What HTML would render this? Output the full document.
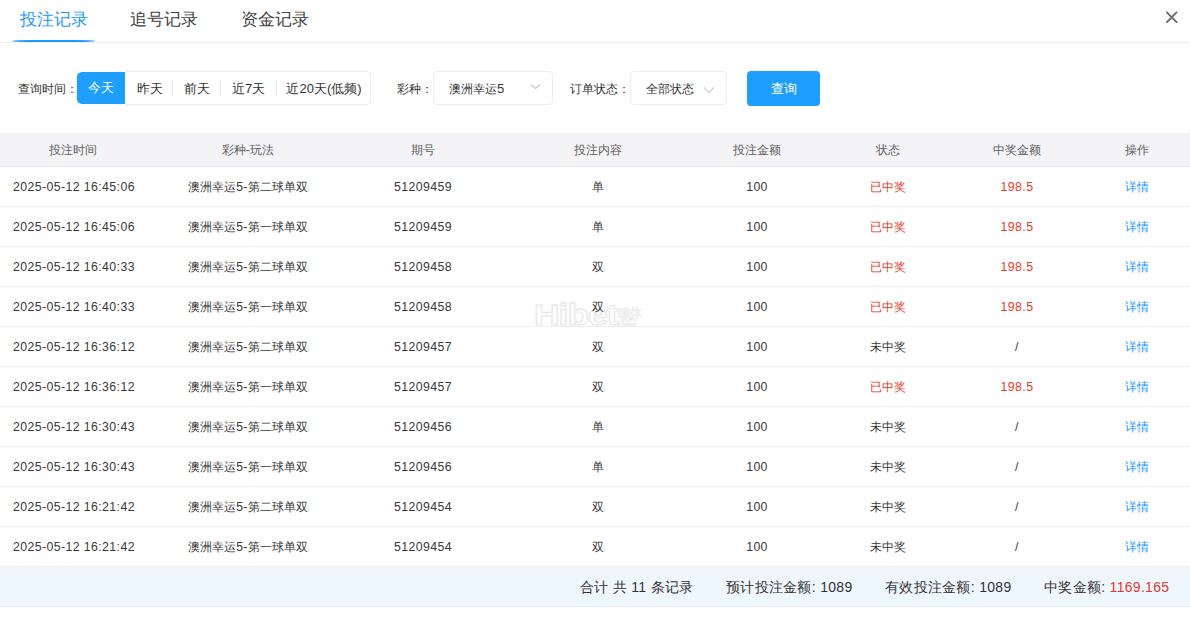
<!DOCTYPE html>
<html><head><meta charset="utf-8">
<style>
*{margin:0;padding:0;box-sizing:border-box}
html,body{width:1190px;height:630px;background:#fff;overflow:hidden;font-family:"Liberation Sans",sans-serif;color:#383838}
i{font-style:normal;font-size:12px}
.tabs{position:absolute;left:0;top:0;width:1190px;height:43px;border-bottom:1px solid #f0f0f0}
.tab{position:absolute;top:9px;font-size:17px;line-height:20px;color:#404040}
.tab i{font-size:16.5px}
.tab.active{color:#1e96fc}
.ul{position:absolute;left:12px;top:40px;width:83px;height:2px;background:#1e96fc;border-radius:50%/100%}
.close{position:absolute;left:1163px;top:9px}
.lbl{position:absolute;top:81px;font-size:13px;line-height:16px;color:#333}
.grp{position:absolute;left:77px;top:71px;width:294px;height:34px;border:1px solid #eceef2;border-radius:4px}
.gb{position:absolute;top:0;height:32px;line-height:33px;font-size:13px;text-align:center;color:#333}
.gb i{font-size:13px}
.gb.on{background:#1e9fff;color:#fff;left:-1px!important;top:-1px;height:34px;line-height:32px;width:48px!important;border-radius:5px 0 0 5px;border-top:1px solid #fff;border-bottom:1px solid #fff;background-clip:padding-box}
.sep{position:absolute;top:8px;width:1px;height:16px;background:#e6e6e6}
.sel{position:absolute;top:71px;height:34px;border:1px solid #eceef2;border-radius:4px;font-size:13px;line-height:33px;color:#333}
.chev{position:absolute}
.btn{position:absolute;left:747px;top:71px;width:73px;height:35px;background:#1e9fff;border-radius:4px;color:#fff;font-size:13px;line-height:35px;text-align:center}
.btn i{font-size:13px}
.thead{position:absolute;left:0;top:133px;width:1190px;height:34px;background:#f4f4f6;border-bottom:1px solid #e7ebf1}
.thead .c{top:9px;color:#606060}
.row{position:absolute;left:0;width:1190px;height:40px;border-bottom:1px solid #eeeeee}
.c{position:absolute;width:200px;text-align:center;font-size:12.3px;line-height:16px;top:12px;white-space:nowrap;letter-spacing:0.4px}
.c i{letter-spacing:0}
.red{color:#e5392c}
.blue{color:#1b95fd}
.foot{position:absolute;left:0;top:566px;width:1190px;height:41px;background:#eef6fe;border-bottom:1px solid #e8eef4;border-top:1px solid #eef0f2}
.ft{position:absolute;top:12px;font-size:14px;line-height:16px;color:#333;letter-spacing:0.3px}
.ft i{font-size:100%}

</style></head><body>
<div class="tabs">
  <div class="tab active" style="left:20px"><i>投注记录</i></div>
  <div class="tab" style="left:130px"><i>追号记录</i></div>
  <div class="tab" style="left:241px"><i>资金记录</i></div>
  <div class="ul"></div>
  <svg class="close" width="20" height="20" viewBox="0 0 20 20"><path d="M3.9 3.4L13.6 13.1M13.6 3.4L3.9 13.1" stroke="#6b6b6b" stroke-width="1.9" stroke-linecap="round" fill="none"/></svg>
</div>
<div class="lbl" style="left:18px"><i>查询时间：</i></div>
<div class="grp">
  <div class="gb on" style="left:0;width:48px"><i>今天</i></div>
  <div class="gb" style="left:48px;width:47px"><i>昨天</i></div>
  <div class="sep" style="left:94px"></div>
  <div class="gb" style="left:95px;width:48px"><i>前天</i></div>
  <div class="sep" style="left:142px"></div>
  <div class="gb" style="left:143px;width:55px"><i>近</i>7<i>天</i></div>
  <div class="sep" style="left:198px"></div>
  <div class="gb" style="left:199px;width:94px"><i>近</i>20<i>天</i>(<i>低频</i>)</div>
</div>
<div class="lbl" style="left:397px"><i>彩种：</i></div>
<div class="sel" style="left:433px;width:120px;padding-left:15px"><i>澳洲幸运</i>5
  <svg class="chev" style="left:95.5px;top:10.5px" width="12" height="8" viewBox="0 0 12 8"><path d="M1 1.5L5.5 5.5L10 1.5" stroke="#c9ccd4" stroke-width="1.2" fill="none"/></svg></div>
<div class="lbl" style="left:570px"><i>订单状态：</i></div>
<div class="sel" style="left:630px;width:97px;padding-left:15px"><i>全部状态</i>
  <svg class="chev" style="left:72px;top:13.5px" width="12" height="8" viewBox="0 0 12 8"><path d="M1 1.5L6 6.5L11 1.5" stroke="#c9ccd4" stroke-width="1.2" fill="none"/></svg></div>
<div class="btn"><i>查询</i></div>
<svg style="position:absolute;left:525px;top:295px" width="140" height="40" viewBox="0 0 140 40">
<g transform="translate(9,30) scale(1.22,1)"><text x="0" y="0" font-family="Liberation Sans" font-weight="bold" font-size="29" letter-spacing="-0.8" fill="#fff" stroke="#ebebeb" stroke-width="1.4">Hibet</text></g>
<text x="92" y="30.5" font-family="Liberation Sans" font-weight="bold" font-size="14" letter-spacing="-0.3" fill="#fff" stroke="#ececec" stroke-width="1.1">.cc</text>
<text x="93" y="22" font-family="Liberation Sans" font-weight="bold" font-size="12" fill="#fff" stroke="#efefef" stroke-width="0.6">综体</text>
</svg>
<div class="thead">
<div class="c" style="left:-27px"><i>投注时间</i></div>
<div class="c" style="left:148px"><i>彩种</i>-<i>玩法</i></div>
<div class="c" style="left:323px"><i>期号</i></div>
<div class="c" style="left:498px"><i>投注内容</i></div>
<div class="c" style="left:657px"><i>投注金额</i></div>
<div class="c" style="left:788px"><i>状态</i></div>
<div class="c" style="left:917px"><i>中奖金额</i></div>
<div class="c" style="left:1037px"><i>操作</i></div>
</div>
<div class="row" style="top:167px">
<div class="c" style="left:-26px">2025-05-12 16:45:06</div>
<div class="c" style="left:148px"><i>澳洲幸运</i>5-<i>第二球单双</i></div>
<div class="c" style="left:323px">51209459</div>
<div class="c" style="left:498px"><i>单</i></div>
<div class="c" style="left:657px">100</div>
<div class="c red" style="left:788px"><i>已中奖</i></div>
<div class="c red" style="left:917px">198.5</div>
<div class="c blue" style="left:1037px"><i>详情</i></div>
</div>
<div class="row" style="top:207px">
<div class="c" style="left:-26px">2025-05-12 16:45:06</div>
<div class="c" style="left:148px"><i>澳洲幸运</i>5-<i>第一球单双</i></div>
<div class="c" style="left:323px">51209459</div>
<div class="c" style="left:498px"><i>单</i></div>
<div class="c" style="left:657px">100</div>
<div class="c red" style="left:788px"><i>已中奖</i></div>
<div class="c red" style="left:917px">198.5</div>
<div class="c blue" style="left:1037px"><i>详情</i></div>
</div>
<div class="row" style="top:247px">
<div class="c" style="left:-26px">2025-05-12 16:40:33</div>
<div class="c" style="left:148px"><i>澳洲幸运</i>5-<i>第二球单双</i></div>
<div class="c" style="left:323px">51209458</div>
<div class="c" style="left:498px"><i>双</i></div>
<div class="c" style="left:657px">100</div>
<div class="c red" style="left:788px"><i>已中奖</i></div>
<div class="c red" style="left:917px">198.5</div>
<div class="c blue" style="left:1037px"><i>详情</i></div>
</div>
<div class="row" style="top:287px">
<div class="c" style="left:-26px">2025-05-12 16:40:33</div>
<div class="c" style="left:148px"><i>澳洲幸运</i>5-<i>第一球单双</i></div>
<div class="c" style="left:323px">51209458</div>
<div class="c" style="left:498px"><i>双</i></div>
<div class="c" style="left:657px">100</div>
<div class="c red" style="left:788px"><i>已中奖</i></div>
<div class="c red" style="left:917px">198.5</div>
<div class="c blue" style="left:1037px"><i>详情</i></div>
</div>
<div class="row" style="top:327px">
<div class="c" style="left:-26px">2025-05-12 16:36:12</div>
<div class="c" style="left:148px"><i>澳洲幸运</i>5-<i>第二球单双</i></div>
<div class="c" style="left:323px">51209457</div>
<div class="c" style="left:498px"><i>双</i></div>
<div class="c" style="left:657px">100</div>
<div class="c" style="left:788px"><i>未中奖</i></div>
<div class="c" style="left:917px">/</div>
<div class="c blue" style="left:1037px"><i>详情</i></div>
</div>
<div class="row" style="top:367px">
<div class="c" style="left:-26px">2025-05-12 16:36:12</div>
<div class="c" style="left:148px"><i>澳洲幸运</i>5-<i>第一球单双</i></div>
<div class="c" style="left:323px">51209457</div>
<div class="c" style="left:498px"><i>双</i></div>
<div class="c" style="left:657px">100</div>
<div class="c red" style="left:788px"><i>已中奖</i></div>
<div class="c red" style="left:917px">198.5</div>
<div class="c blue" style="left:1037px"><i>详情</i></div>
</div>
<div class="row" style="top:407px">
<div class="c" style="left:-26px">2025-05-12 16:30:43</div>
<div class="c" style="left:148px"><i>澳洲幸运</i>5-<i>第二球单双</i></div>
<div class="c" style="left:323px">51209456</div>
<div class="c" style="left:498px"><i>单</i></div>
<div class="c" style="left:657px">100</div>
<div class="c" style="left:788px"><i>未中奖</i></div>
<div class="c" style="left:917px">/</div>
<div class="c blue" style="left:1037px"><i>详情</i></div>
</div>
<div class="row" style="top:447px">
<div class="c" style="left:-26px">2025-05-12 16:30:43</div>
<div class="c" style="left:148px"><i>澳洲幸运</i>5-<i>第一球单双</i></div>
<div class="c" style="left:323px">51209456</div>
<div class="c" style="left:498px"><i>单</i></div>
<div class="c" style="left:657px">100</div>
<div class="c" style="left:788px"><i>未中奖</i></div>
<div class="c" style="left:917px">/</div>
<div class="c blue" style="left:1037px"><i>详情</i></div>
</div>
<div class="row" style="top:487px">
<div class="c" style="left:-26px">2025-05-12 16:21:42</div>
<div class="c" style="left:148px"><i>澳洲幸运</i>5-<i>第二球单双</i></div>
<div class="c" style="left:323px">51209454</div>
<div class="c" style="left:498px"><i>双</i></div>
<div class="c" style="left:657px">100</div>
<div class="c" style="left:788px"><i>未中奖</i></div>
<div class="c" style="left:917px">/</div>
<div class="c blue" style="left:1037px"><i>详情</i></div>
</div>
<div class="row" style="top:527px">
<div class="c" style="left:-26px">2025-05-12 16:21:42</div>
<div class="c" style="left:148px"><i>澳洲幸运</i>5-<i>第一球单双</i></div>
<div class="c" style="left:323px">51209454</div>
<div class="c" style="left:498px"><i>双</i></div>
<div class="c" style="left:657px">100</div>
<div class="c" style="left:788px"><i>未中奖</i></div>
<div class="c" style="left:917px">/</div>
<div class="c blue" style="left:1037px"><i>详情</i></div>
</div>
<div class="foot">
  <div class="ft" style="left:580px"><i>合计</i> <i>共</i> 11 <i>条记录</i></div>
  <div class="ft" style="left:726px"><i>预计投注金额</i>: 1089</div>
  <div class="ft" style="left:885px"><i>有效投注金额</i>: 1089</div>
  <div class="ft" style="left:1044px"><i>中奖金额</i>: <span class="red">1169.165</span></div>
</div>
</body></html>
